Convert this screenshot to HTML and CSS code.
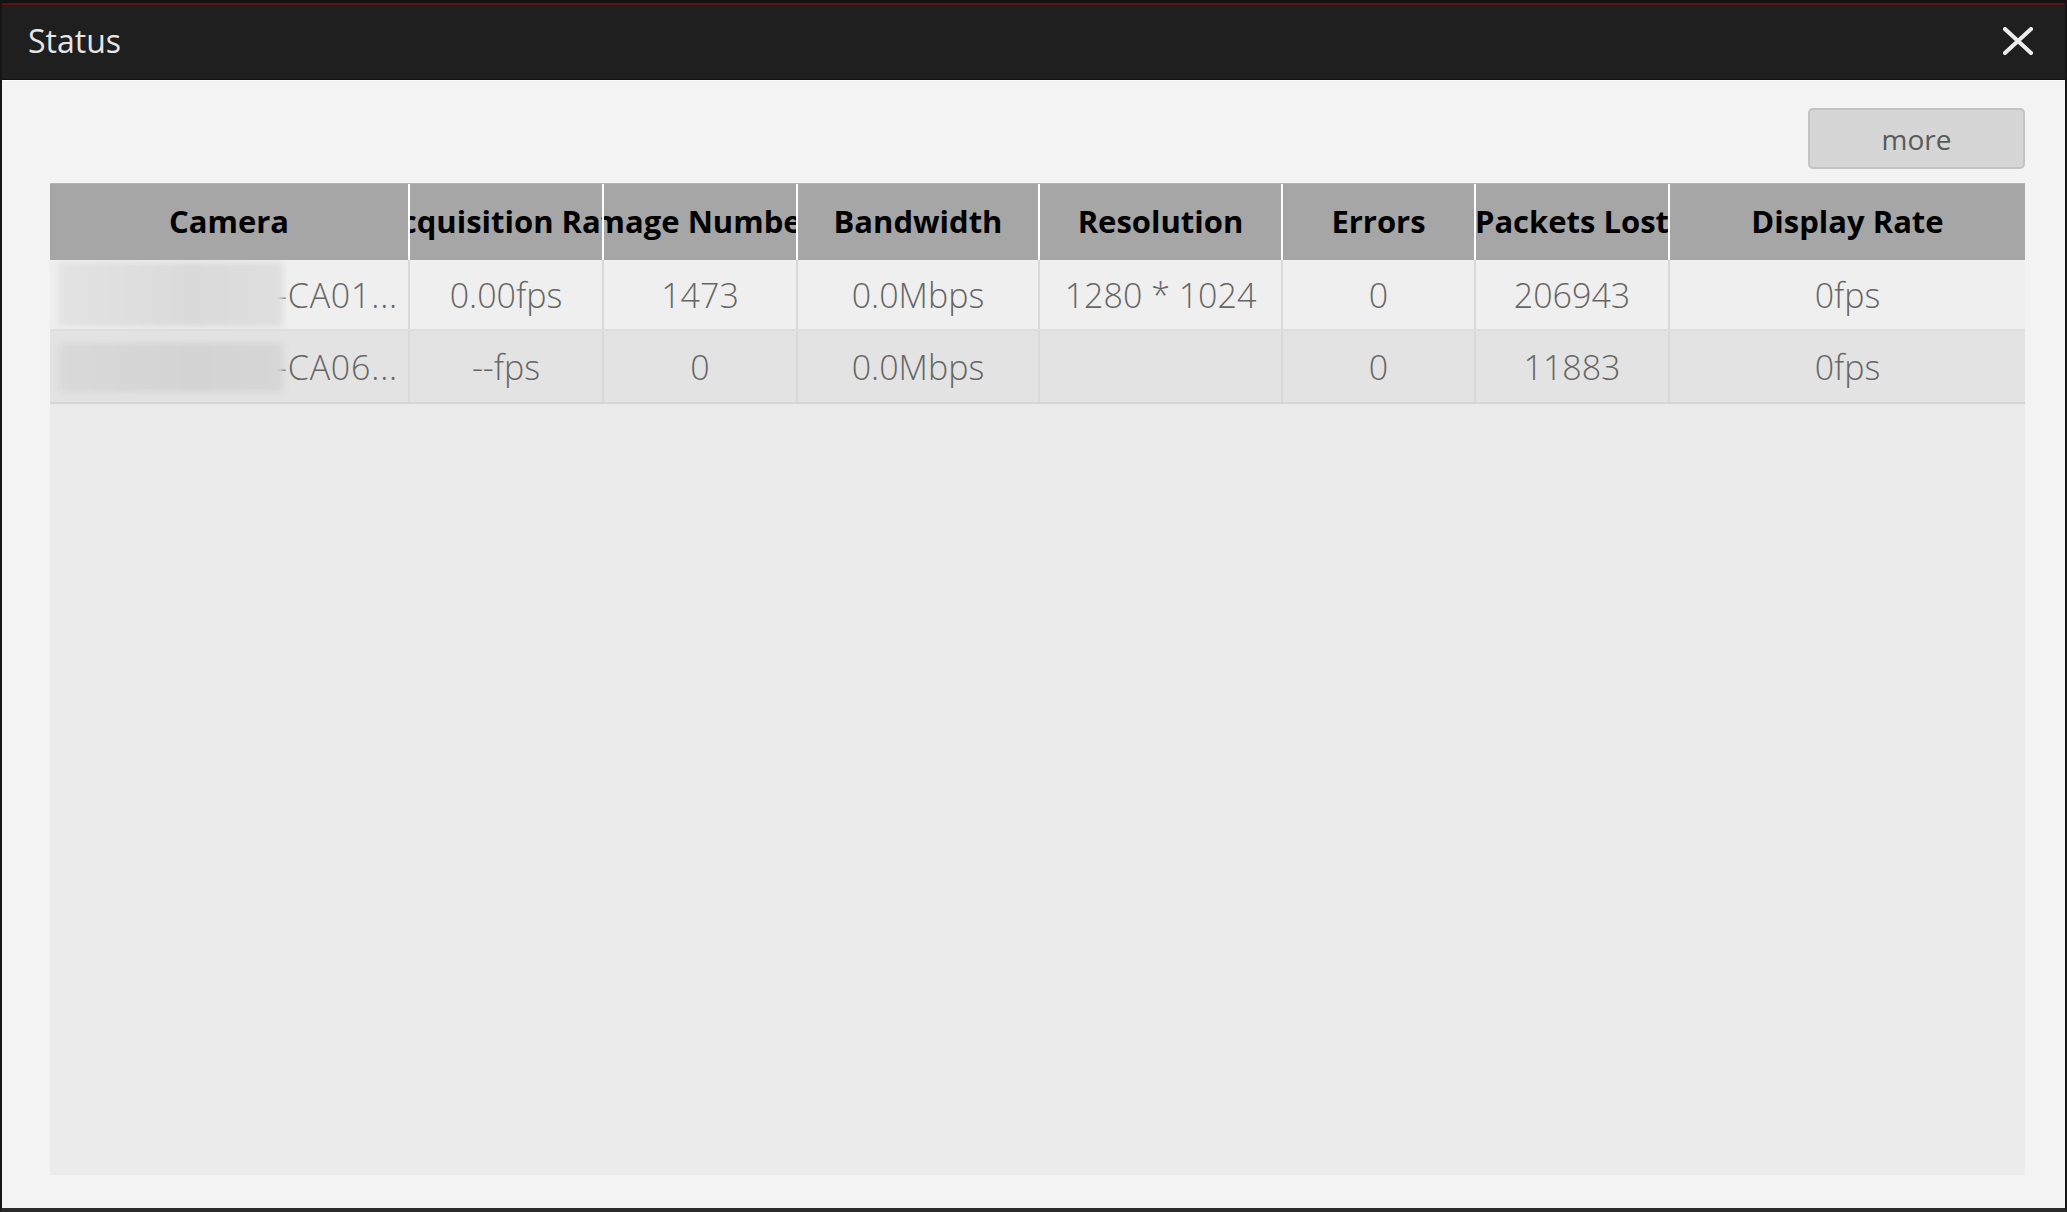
FILE: index.html
```html
<!DOCTYPE html>
<html lang="en">
<head>
<meta charset="utf-8">
<title>Status</title>
<link rel="stylesheet" href="styles.css">
</head>
<body>
<div class="window">
  <div class="titlebar">
    <span class="title">Status</span>
    <button class="close" aria-label="Close">
      <svg width="30" height="28" viewBox="0 0 30 28"><path d="M2 2 L28 26 M28 2 L2 26" stroke="#ececec" stroke-width="4" stroke-linecap="square" fill="none"/></svg>
    </button>
  </div>
  <div class="body">
    <div class="toolbar"><button class="more">more</button></div>
    <div class="table">
      <div class="row head">
        <div class="cell"><span>Camera</span></div>
        <div class="cell"><span>Acquisition Rate</span></div>
        <div class="cell"><span>Image Number</span></div>
        <div class="cell"><span>Bandwidth</span></div>
        <div class="cell"><span>Resolution</span></div>
        <div class="cell"><span>Errors</span></div>
        <div class="cell"><span>Packets Lost</span></div>
        <div class="cell"><span>Display Rate</span></div>
      </div>
      <div class="row data odd">
        <div class="cell cam"><span class="redact"></span><span class="camname">-CA01...</span></div>
        <div class="cell"><span>0.00fps</span></div>
        <div class="cell"><span>1473</span></div>
        <div class="cell"><span>0.0Mbps</span></div>
        <div class="cell"><span>1280 * 1024</span></div>
        <div class="cell"><span>0</span></div>
        <div class="cell"><span>206943</span></div>
        <div class="cell"><span>0fps</span></div>
      </div>
      <div class="row data even">
        <div class="cell cam"><span class="redact"></span><span class="camname">-CA06...</span></div>
        <div class="cell"><span>--fps</span></div>
        <div class="cell"><span>0</span></div>
        <div class="cell"><span>0.0Mbps</span></div>
        <div class="cell"><span></span></div>
        <div class="cell"><span>0</span></div>
        <div class="cell"><span>11883</span></div>
        <div class="cell"><span>0fps</span></div>
      </div>
    </div>
  </div>
</div>
</body>
</html>
```
FILE: styles.css
```css
* { box-sizing: border-box; }
html, body { margin: 0; padding: 0; }
body {
  width: 2067px;
  height: 1212px;
  background: #1c1c1c;
  font-family: "Open Sans", "Liberation Sans", sans-serif;
  overflow: hidden;
}
.window {
  width: 2067px;
  height: 1212px;
  display: flex;
  flex-direction: column;
  border-left: 2px solid #151515;
  border-right: 2px solid #151515;
  border-bottom: 4px solid #2a2a2a;
  background: #f3f3f3;
}
.titlebar {
  height: 80px;
  flex: none;
  background: #1f1f20;
  box-shadow: inset 0 3px 0 #121212, inset 0 5px 0 #5e0f12;
  display: flex;
  align-items: center;
  justify-content: space-between;
  padding: 2px 32px 0 26px;
  border-bottom: 1px solid #111;
}
.title {
  color: #e6e6e6;
  font-size: 32px;
  font-weight: 400;
}
.close {
  border: 0;
  background: transparent;
  padding: 0;
  width: 30px;
  height: 28px;
  display: flex;
}
.body {
  flex: 1;
  display: flex;
  flex-direction: column;
  padding: 27px 40px 33px 48px;
  border-top: 1px solid #fafafa;
}
.toolbar {
  display: flex;
  justify-content: flex-end;
  margin-bottom: 14px;
}
.more {
  width: 217px;
  height: 61px;
  background: #d6d6d6;
  border: 2px solid #c3c3c3;
  border-radius: 5px;
  color: #5a5a5a;
  font-family: "Open Sans", "Liberation Sans", sans-serif;
  font-size: 28px;
  padding: 0;
}
.table {
  flex: 1;
  background: #ebebeb;
  display: flex;
  flex-direction: column;
}
.row {
  display: grid;
  grid-template-columns: 360px 194px 194px 242px 243px 193px 194px 1fr;
}
.cell {
  display: flex;
  align-items: center;
  justify-content: center;
  overflow: hidden;
  white-space: nowrap;
}
.head {
  height: 77px;
  background: #a6a6a6;
  border-top: 1px solid #b4b4b4;
}
.head .cell {
  border-right: 2px solid #ffffff;
  color: #000;
  font-weight: 700;
  font-size: 31px;
  letter-spacing: 0;
  padding-bottom: 2px;
}
.head .cell:last-child { border-right: 0; }
.data .cell {
  border-right: 2px solid #d9d9d9;
  color: #666;
  font-weight: 300;
  font-size: 34px;
}
.data .cell:last-child { border-right: 0; }
.odd {
  height: 71px;
  background: #efefef;
  border-bottom: 2px solid #dedede;
}
.even {
  height: 73px;
  background: #e3e3e3;
  border-bottom: 2px solid #d6d6d6;
}
.cam {
  justify-content: flex-start;
  padding-left: 8px;
}
.redact {
  position: relative;
  z-index: 1;
  flex: none;
  align-self: stretch;
  width: 225px;
  margin: 2px 0;
  filter: blur(3px);
}
.camname {
  margin-left: -7px;
  letter-spacing: 0.8px;
}
.odd .redact { background: linear-gradient(90deg, #e3e3e3, #dadada 60%, #dedede); }
.even .redact { background: linear-gradient(90deg, #d9d9d9, #d3d3d3 60%, #d6d6d6); margin: 12px 0 10px; }
```
